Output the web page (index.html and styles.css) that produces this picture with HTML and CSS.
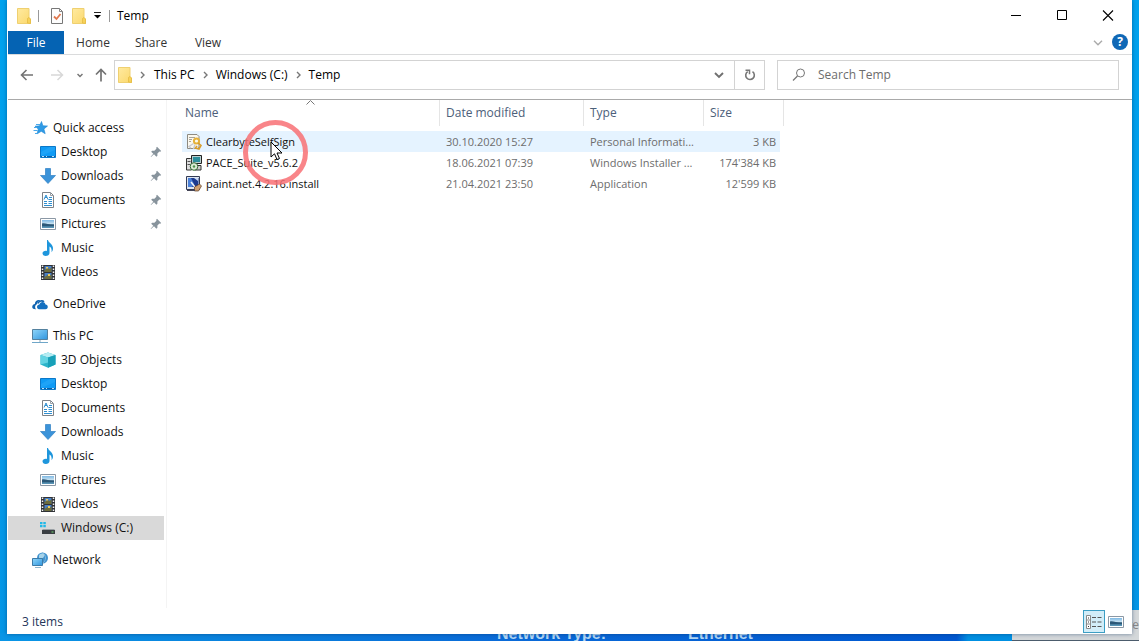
FILE: index.html
```html
<!DOCTYPE html>
<html lang="en">
<head>
<meta charset="utf-8">
<title>Temp</title>
<link rel="stylesheet" href="styles.css">
</head>
<body>
<svg class="sprite" aria-hidden="true">
  <defs>
    <linearGradient id="g-folder" x1="0" y1="0" x2="1" y2="1"><stop offset="0" stop-color="#ffeaa0"/><stop offset="1" stop-color="#fbd86c"/></linearGradient>
    <linearGradient id="g-screen" x1="0" y1="0" x2="1" y2="1"><stop offset="0" stop-color="#8fd6fa"/><stop offset="1" stop-color="#2f95de"/></linearGradient>
    <linearGradient id="g-photo" x1="0" y1="0" x2="0" y2="1"><stop offset="0" stop-color="#7db8e4"/><stop offset=".45" stop-color="#c4e0f0"/><stop offset=".6" stop-color="#2d5a78"/><stop offset="1" stop-color="#5f9ec0"/></linearGradient>
  </defs>
  <symbol id="folder" viewBox="0 0 16 16"><path d="M1.500.5h11.500v9.500l1.500 1v4.500h-13z" fill="url(#g-folder)" stroke="#efd070"/><path d="M11.500 15V10.500l1.500-1 1.500 1.500v4.500z" fill="#f7d25c" stroke="#e3b93e" stroke-width=".7"/></symbol>
  <symbol id="props" viewBox="0 0 16 16"><path d="M2.500.5h8l3 3v12h-11z" fill="#fdfdfd" stroke="#777"/><path d="M10.500.5v3h3" fill="none" stroke="#888"/><path d="M5 8.500l2.500 2.500L11.500 6" fill="none" stroke="#e0784e" stroke-width="1.800"/></symbol>
  <symbol id="star" viewBox="0 0 16 16"><path d="M9.500 1.500l1.400 4.300 4.600.2-3.600 3 1.300 4.700-4-2.400-4.200 2.600 1.300-4.800L3 6.200l4.600-.4z" fill="#2f9be6" stroke="#1c86d4" stroke-width=".6"/><path d="M4 4.500h4M1.500 10.500h4M2 7.500h3M3 13.500h3" stroke="#4aa8ea" stroke-width="1"/></symbol>
  <symbol id="desktop" viewBox="0 0 16 16"><path d="M.5 2.500h15v11H.5z" fill="#0f9bf5" stroke="#0b78c8"/><path d="M1 12.500h14" stroke="#0a5fa8"/><path d="M2 12.500h2M6 12.500h1M12 12.500h2" stroke="#bfe3fb"/><path d="M1 12V8l9-5h5v3z" fill="#3db1fb" opacity=".35"/></symbol>
  <symbol id="download" viewBox="0 0 16 16"><path d="M5.500.5h5v7h5L8 15.500.5 7.500h5z" fill="#3b93d9" stroke="#2f7fc4" stroke-width=".7"/></symbol>
  <symbol id="doc" viewBox="0 0 16 16"><path d="M2.500.5h8l3 3v12h-11z" fill="#fff" stroke="#7d8288"/><path d="M10.500.5v3h3" fill="none" stroke="#9aa0a6"/><path d="M4 7.500L6 3l2 4.500M5 5.500h2M9 5.500h3M8.500 7.500H12M4 9.500h3M8.500 9.500H12M4 11.500h3M8.500 11.500H12M4 13.500h8" fill="none" stroke="#2f8fd0"/></symbol>
  <symbol id="photo" viewBox="0 0 16 16"><path d="M.5 2.500h15v11H.5z" fill="#fff" stroke="#8b98a5"/><path d="M2 4h12v8H2z" fill="url(#g-photo)"/><path d="M2 7.500C5 6.500 8 9 14 9v1H2z" fill="#2b5878"/></symbol>
  <symbol id="music" viewBox="0 0 16 16"><path d="M8 0c.4 3 5.500 4 5 9-.2 1.500-.8 2.500-1.500 3.200.6-3-.5-5-2-5.700V13c0 2-1.700 3-3.700 3S2.500 14.800 2.500 13.300c0-1.800 2.500-3 4.500-2.300V0z" fill="#1e96dc"/></symbol>
  <symbol id="video" viewBox="0 0 16 16"><path d="M1 1h14v15H1z" fill="#303236"/><path d="M2.500 1.500v14M13.500 1.500v14" stroke="#f2f2f2" stroke-width="1.500" stroke-dasharray="1.500 1.500"/><path d="M4.500 2h7v6h-7zM4.500 9h7v6h-7z" fill="#4a80c4"/><path d="M4.500 6l3-2 2 1 2-1.500V8h-7zM4.500 13l3-2 2 1 2-1.500V15h-7z" fill="#6d6c3c"/><path d="M8 10h2v2H8zM6 3h2v1.500H6z" fill="#eecb5a"/></symbol>
  <symbol id="cloud" viewBox="0 0 16 16"><path d="M.2 11c0-2 1.500-3 2.600-3 .2-3 3-4.700 5.800-3.500C5.500 5 5 8 5 8.200c-1.800.6-2.500 3-1 5-2 .1-3.800-.4-3.800-2.200z" fill="#0f63b0"/><path d="M5 11c0-1.700 1.200-2.600 2.400-2.500C8 5.500 12.500 5 13.500 8.500c3 .3 3 4.700 0 4.800H7C5.800 13.200 5 12.200 5 11z" fill="#1470c0"/><path d="M5.800 7.500C7 4.500 10.500 4.300 12 5.800" stroke="#0f63b0" stroke-width="1.600" fill="none"/></symbol>
  <symbol id="pc" viewBox="0 0 16 16"><path d="M.5 1.500h15v10H.5z" fill="url(#g-screen)" stroke="#54819f"/><path d="M7 12h2v2H7z" fill="#c4d3dd"/><path d="M0 14.500h16" stroke="#6fa6c8"/></symbol>
  <symbol id="cube" viewBox="0 0 16 16"><path d="M8 .5L15.500 3v9.500L8 15.800.5 12.500V3z" fill="#2cb4c9"/><path d="M8 .5L15.500 3 8 5.500.5 3z" fill="#b5ecf2"/><path d="M8 5.500L15.500 3v9.500L8 15.800z" fill="#17a0b8"/><path d="M.5 3L8 5.500v5L.5 12.500z" fill="#63d3e2"/></symbol>
  <symbol id="drive" viewBox="0 0 16 16"><path d="M0 2h2.500v2.200H0zM3.300 2h2.500v2.200H3.300zM0 5h2.500v2.200H0zM3.300 5h2.500v2.200H3.300z" fill="#20b8e8"/><path d="M3 9h11l1 1H2z" fill="#9aa0a4"/><path d="M2 10h13v4H2z" fill="#3a3e42"/><path d="M11.500 12h2" stroke="#6fd46f"/></symbol>
  <symbol id="network" viewBox="0 0 16 16"><circle cx="10.500" cy="6" r="5.500" fill="#3f92cf"/><path d="M7 3c2-2 3-1 4-2l2 2-2 3H7z" fill="#a6d3ea"/><path d="M10.500.5c4 3 4 8 0 11" fill="none" stroke="#7fb8dc"/><path d="M.5 6.500h10v7H.5z" fill="url(#g-screen)" stroke="#3d7ba8"/><path d="M3 15.500h6" stroke="#8fb6cd"/></symbol>
  <symbol id="pin" viewBox="0 0 12 12"><path d="M7 .8L11.200 5l-1 .8-.8-.2-2 2v2.200l-1 .9-2.400-2.400L1 11l-.3-.3L3.300 7.800 1.200 5.700l.9-1h2.300l2-2L6.200 1.700z" fill="#87939c"/></symbol>
  <symbol id="cert" viewBox="0 0 16 16"><path d="M1.500.5h9.500l2 2v11l-2 1h-9.500z" fill="#fbf8ee" stroke="#8e8a80"/><path d="M3 3.500h6M3 5.500h3M3 7.500h2" stroke="#a9a49a"/><path d="M7.500 9.500L3 12.500l2 1.500M9 10.500L7.500 15" fill="none" stroke="#c8cad0" stroke-width="1.500"/><circle cx="10.500" cy="7" r="2.600" fill="none" stroke="#e6b23a" stroke-width="2"/><path d="M12 9l3 2.500-2 3.500-3.500-1 1.500-2" fill="none" stroke="#d99c28" stroke-width="1.600"/></symbol>
  <symbol id="msi" viewBox="0 0 16 16"><path d="M5.500.5h10v8h-10z" fill="#b9d0d0" stroke="#222"/><path d="M7 2h7v5H7z" fill="#2c8f9c"/><path d="M9 10.500h6v4.500H9z" fill="#ccc" stroke="#333"/><path d="M.5 3.500h4l1 1v10.500h-5z" fill="#ddd" stroke="#333"/><path d="M1.500 6.500h3M1.500 9.500h3" stroke="#555"/><circle cx="8" cy="11.500" r="3.800" fill="#dcebd6" stroke="#346834"/><circle cx="8" cy="11.500" r="1.200" fill="#4b934b"/></symbol>
  <symbol id="paint" viewBox="0 0 16 16"><path d="M.5.500h13v13H.5z" fill="#dfe6f0" stroke="#333b55"/><path d="M2 2h10.500v9H2z" fill="#1d3a8e"/><path d="M2 2h3l3 6-2 3H2z" fill="#4a80d8"/><path d="M8 2h4v3z" fill="#c9d8f4"/><path d="M5 6l4 5" stroke="#f4f4f4" stroke-width="1.500"/><path d="M8.500 11l5-3 2 2-3 5h-4z" fill="#d0a070" stroke="#5a3c28" stroke-width=".7"/><path d="M1 14.500h8" stroke="#445"/></symbol>
  <symbol id="details" viewBox="0 0 16 16"><path d="M.5 1.500h4v13h-4z" fill="#fff" stroke="#8a8a8a"/><path d="M0 6h5M0 10h5" stroke="#8a8a8a"/><path d="M2 4h1M2 8h1M2 12.500h1" stroke="#333"/><path d="M6 3.500h4M11.500 3.500h4M6 8h4M11.500 8h4M6 12.500h4M11.500 12.500h4" stroke="#555"/></symbol>
</svg>

<div class="backdrop" aria-hidden="true">
  <div class="backdrop-strip"></div>
  <div class="backdrop-panel"><span class="backdrop-tail">re</span></div>
  <span class="backdrop-label label-type">Network Type:</span>
  <span class="backdrop-label label-value">Ethernet</span>
</div>

<div class="window">
  <header class="titlebar">
    <svg class="icon"><use href="#folder"/></svg>
    <span class="bar"></span>
    <button class="quick" aria-label="Properties"><svg class="icon"><use href="#props"/></svg></button>
    <button class="quick" aria-label="New folder"><svg class="icon"><use href="#folder"/></svg></button>
    <button class="quick more" aria-label="Customize Quick Access Toolbar"><svg width="7" height="7" viewBox="0 0 7 7"><path d="M0 .5h7" stroke="#222"/><path d="M0 3h7L3.500 6.500z" fill="#000"/></svg></button>
    <span class="bar bar-last"></span>
    <h1 class="title">Temp</h1>
    <div class="controls">
      <button aria-label="Minimize"><svg width="12" height="12" viewBox="0 0 12 12"><path d="M1 5.500h10" stroke="#000"/></svg></button>
      <button aria-label="Maximize"><svg width="12" height="12" viewBox="0 0 12 12"><path d="M1.500.5h9v9h-9z" fill="none" stroke="#000"/></svg></button>
      <button aria-label="Close"><svg width="12" height="12" viewBox="0 0 12 12"><path d="M1 .5l10 10M11 .5L1 10.500" stroke="#000" stroke-width="1.100"/></svg></button>
    </div>
  </header>

  <div class="ribbon">
    <button class="tab file">File</button>
    <button class="tab">Home</button>
    <button class="tab">Share</button>
    <button class="tab">View</button>
    <button class="expand" aria-label="Expand the Ribbon"><svg width="10" height="6" viewBox="0 0 10 6"><path d="M1 .8l4 4 4-4" fill="none" stroke="#aaa" stroke-width="1.400"/></svg></button>
    <button class="help" aria-label="Help">?</button>
  </div>

  <div class="navbar">
    <div class="history">
      <button aria-label="Back"><svg width="14" height="12" viewBox="0 0 14 12"><path d="M13 6H2M6.500 1L1.500 6l5 5" fill="none" stroke="#737373" stroke-width="1.600"/></svg></button>
      <button aria-label="Forward"><svg width="14" height="12" viewBox="0 0 14 12"><path d="M1 6h11M7.500 1l5 5-5 5" fill="none" stroke="#d8d8d8" stroke-width="1.500"/></svg></button>
      <button class="recent" aria-label="Recent locations"><svg width="6" height="5" viewBox="0 0 6 5"><path d="M.5 1L3 3.500 5.500 1" fill="none" stroke="#777" stroke-width="1.500"/></svg></button>
      <button aria-label="Up"><svg width="12" height="14" viewBox="0 0 12 14"><path d="M6 13.500V2M1 6.500l5-5 5 5" fill="none" stroke="#737373" stroke-width="1.700"/></svg></button>
    </div>
    <div class="address">
      <svg class="icon"><use href="#folder"/></svg>
      <svg class="crumb-arrow" viewBox="0 0 5 8"><path d="M1 1l3 3-3 3"/></svg>
      <button class="crumb">This PC</button>
      <svg class="crumb-arrow" viewBox="0 0 5 8"><path d="M1 1l3 3-3 3"/></svg>
      <button class="crumb">Windows (C:)</button>
      <svg class="crumb-arrow" viewBox="0 0 5 8"><path d="M1 1l3 3-3 3"/></svg>
      <button class="crumb">Temp</button>
      <button class="drop" aria-label="Previous locations"><svg width="10" height="7" viewBox="0 0 10 7"><path d="M1 1l4 4 4-4" fill="none" stroke="#707070" stroke-width="1.900"/></svg></button>
      <button class="refresh" aria-label="Refresh"><svg width="12" height="12" viewBox="0 0 12 12"><path d="M8.500 2.700a4.300 4.300 0 1 1-4.800-.1" fill="none" stroke="#777" stroke-width="1.600"/><path d="M1.500 1.300h4v4" fill="none" stroke="#777" stroke-width="1.500"/></svg></button>
    </div>
    <label class="search">
      <svg width="14" height="14" viewBox="0 0 14 14"><circle cx="8.500" cy="5" r="4" fill="none" stroke="#777"/><path d="M5.500 8L1 12.500" stroke="#777" stroke-width="1.200"/></svg>
      <input type="search" placeholder="Search Temp" aria-label="Search Temp">
    </label>
  </div>

  <div class="content">
    <nav class="sidebar">
      <ul class="group">
        <li><a class="item root" href="#"><svg class="icon"><use href="#star"/></svg>Quick access</a></li>
        <li><a class="item" href="#"><svg class="icon"><use href="#desktop"/></svg>Desktop<svg class="pin"><use href="#pin"/></svg></a></li>
        <li><a class="item" href="#"><svg class="icon"><use href="#download"/></svg>Downloads<svg class="pin"><use href="#pin"/></svg></a></li>
        <li><a class="item" href="#"><svg class="icon"><use href="#doc"/></svg>Documents<svg class="pin"><use href="#pin"/></svg></a></li>
        <li><a class="item" href="#"><svg class="icon"><use href="#photo"/></svg>Pictures<svg class="pin"><use href="#pin"/></svg></a></li>
        <li><a class="item" href="#"><svg class="icon"><use href="#music"/></svg>Music</a></li>
        <li><a class="item" href="#"><svg class="icon"><use href="#video"/></svg>Videos</a></li>
      </ul>
      <ul class="group">
        <li><a class="item root" href="#"><svg class="icon"><use href="#cloud"/></svg>OneDrive</a></li>
      </ul>
      <ul class="group">
        <li><a class="item root" href="#"><svg class="icon"><use href="#pc"/></svg>This PC</a></li>
        <li><a class="item" href="#"><svg class="icon"><use href="#cube"/></svg>3D Objects</a></li>
        <li><a class="item" href="#"><svg class="icon"><use href="#desktop"/></svg>Desktop</a></li>
        <li><a class="item" href="#"><svg class="icon"><use href="#doc"/></svg>Documents</a></li>
        <li><a class="item" href="#"><svg class="icon"><use href="#download"/></svg>Downloads</a></li>
        <li><a class="item" href="#"><svg class="icon"><use href="#music"/></svg>Music</a></li>
        <li><a class="item" href="#"><svg class="icon"><use href="#photo"/></svg>Pictures</a></li>
        <li><a class="item" href="#"><svg class="icon"><use href="#video"/></svg>Videos</a></li>
        <li><a class="item current" href="#" aria-current="page"><svg class="icon"><use href="#drive"/></svg>Windows (C:)</a></li>
      </ul>
      <ul class="group">
        <li><a class="item root" href="#"><svg class="icon"><use href="#network"/></svg>Network</a></li>
      </ul>
    </nav>

    <main class="files">
      <table class="list">
        <colgroup><col class="c-name"><col class="c-date"><col class="c-type"><col class="c-size"></colgroup>
        <thead>
          <tr>
            <th aria-sort="ascending"><button class="sort">Name<svg class="sort-mark" width="9" height="5" viewBox="0 0 9 5"><path d="M.5 4.500l4-4 4 4" fill="none" stroke="#777"/></svg></button></th>
            <th><button class="sort">Date modified</button></th>
            <th><button class="sort">Type</button></th>
            <th><button class="sort">Size</button></th>
          </tr>
        </thead>
        <tbody>
          <tr class="hover"><td class="name"><div class="entry"><svg class="icon"><use href="#cert"/></svg>ClearbyteSelfSign</div></td><td>30.10.2020 15:27</td><td>Personal Informati...</td><td class="size">3 KB</td></tr>
          <tr><td class="name"><div class="entry"><svg class="icon"><use href="#msi"/></svg>PACE_Suite_v5.6.2</div></td><td>18.06.2021 07:39</td><td>Windows Installer ...</td><td class="size">174'384 KB</td></tr>
          <tr><td class="name"><div class="entry"><svg class="icon"><use href="#paint"/></svg>paint.net.4.2.16.install</div></td><td>21.04.2021 23:50</td><td>Application</td><td class="size">12'599 KB</td></tr>
        </tbody>
      </table>
    </main>
  </div>

  <footer class="status">
    <span>3 items</span>
    <div class="views">
      <button class="view active" aria-label="Details view"><svg class="icon"><use href="#details"/></svg></button>
      <button class="view" aria-label="Large thumbnails"><svg class="icon"><use href="#photo"/></svg></button>
    </div>
  </footer>
</div>

<div class="click-ring" aria-hidden="true"></div>
<svg class="pointer" aria-hidden="true" width="13" height="20" viewBox="0 0 13 20"><path d="M1 1v15l3.500-3.200L7 18.500l2.500-1L7 12h5z" fill="#fff" stroke="#000"/></svg>
</body>
</html>
```
FILE: styles.css
```css
* { box-sizing: border-box; }

body {
  margin: 0;
  height: 100vh;
  padding: 0 7px 7px;
  overflow: hidden;
  background: linear-gradient(#00a3ee, #0596e6);
  font: 12px/16px "Open Sans", "Noto Sans", sans-serif;
  color: #111;
}

button {
  display: flex;
  align-items: center;
  justify-content: center;
  margin: 0;
  padding: 0;
  border: 0;
  background: none;
  font: inherit;
  color: inherit;
}

a { color: inherit; text-decoration: none; }
ul { list-style: none; margin: 0; padding: 0; }
.sprite { position: absolute; width: 0; height: 0; }
.icon { width: 16px; height: 16px; flex: none; display: block; }

/* Desktop behind the window */
.backdrop { position: absolute; inset: 0; overflow: hidden; }
.backdrop-strip {
  position: absolute;
  left: 0; right: 0; bottom: 0;
  height: 8px;
  background: linear-gradient(90deg, #0a96e6, #0a7edc 25%, #0a6ad8 45%, #0058d0 84%, #0090e2 85%);
}
.backdrop-panel {
  position: absolute;
  right: 0; bottom: 0;
  width: 127px;
  height: 31px;
  background: #d4d8da;
  border-bottom: 1px solid #4c5c6c;
}
.backdrop-tail { position: absolute; right: 0; top: 7px; color: #888; }
.backdrop-label {
  position: absolute;
  bottom: -2px;
  font: bold 16px/18px "Liberation Sans", sans-serif;
  color: #b4d8f4;
}
.label-type { left: 497px; }
.label-value { left: 688px; }

.window {
  position: relative;
  display: flex;
  flex-direction: column;
  height: 100%;
  padding-left: 1px;
  background: #fff;
  box-shadow: 0 0 4px rgba(0, 40, 90, .5);
}

.titlebar { display: flex; align-items: center; height: 31px; padding-left: 8px; }
.bar { width: 1px; height: 12px; margin: 0 7px 0 6px; background: #999; }
.quick { width: 22px; height: 22px; }
.quick.more { width: 15px; }
.bar-last { margin: 0 7px 0 4px; }
.title { margin: 0; font: inherit; color: #000; }
.controls { display: flex; margin-left: auto; padding-right: 1px; }
.controls button { width: 46px; height: 31px; }

.ribbon { display: flex; height: 24px; border-bottom: 1px solid #dadbdc; color: #333; }
.tab { width: 58px; height: 23px; }
.tab.file { width: 56px; background: #0563b3; color: #fff; }
.tab:nth-child(4) { width: 56px; }
.expand { width: 22px; margin-left: auto; }
.help {
  width: 16px; height: 16px;
  margin: 3px 4px 0 3px;
  border-radius: 50%;
  background: #0f68b6;
  color: #fff;
  font-weight: bold;
}

.navbar {
  display: flex;
  gap: 12px;
  height: 45px;
  padding: 5px 13px 9px 0;
  border-bottom: 1px solid #a9a9a9;
}
.history { display: flex; width: 94px; padding-left: 12px; }
.history button { width: 14px; margin-right: 16px; }
.history .recent { width: 6px; margin: 0 12px 0 -3px; }
.history button:last-child { width: 12px; margin: 0; }
.address {
  display: flex;
  align-items: center;
  flex: 1;
  padding-left: 2px;
  border: 1px solid #d3d3d3;
  color: #000;
}
.crumb-arrow { width: 5px; height: 8px; margin: 0 9px 0 7px; fill: none; stroke: #777; stroke-width: 1.4; }
.crumb + .crumb-arrow { margin: 0 8px; }
.drop { width: 30px; height: 100%; margin-left: auto; }
.refresh { width: 30px; height: 100%; border-left: 1px solid #d3d3d3; }
.search {
  display: flex;
  align-items: center;
  gap: 12px;
  flex: 0 1 342px;
  padding: 0 14px;
  border: 1px solid #d3d3d3;
}
.search input { flex: 1; min-width: 0; padding: 0; border: 0; outline: 0; background: none; font: inherit; }
.search input::placeholder { color: #6d6d6d; opacity: 1; }

.content { display: flex; flex: 1; min-height: 0; }
.sidebar { width: 159px; padding: 16px 2px 0 0; border-right: 1px solid #f4f4f4; }
.group + .group { margin-top: 8px; }
.item { display: flex; align-items: center; gap: 5px; height: 24px; padding-left: 32px; }
.item.root { padding-left: 24px; }
.item.current { background: #d9d9d9; }
.pin { width: 12px; height: 12px; margin: 0 2px 0 auto; }

.files { flex: 1; min-width: 0; padding-left: 15px; }
.list { width: 602px; table-layout: fixed; border-collapse: separate; border-spacing: 0; color: #6d6d6d; }
.c-name { width: 258px; }
.c-date { width: 144px; }
.c-type { width: 120px; }
.c-size { width: 80px; }
th { padding: 0 0 5px; font-weight: normal; }
.sort {
  position: relative;
  width: 100%;
  height: 26px;
  padding-left: 6px;
  border-right: 1px solid #e5e5e5;
  justify-content: flex-start;
  color: #4c607a;
}
th:first-child .sort { padding-left: 3px; }
.sort-mark { position: absolute; top: 0; left: 0; right: 0; margin: 0 auto; }
td { height: 21px; padding: 0 0 0 6px; font-size: 11px; white-space: nowrap; }
td.name { padding-left: 4px; color: #111; }
td.size { padding: 0 4px 0 0; border-right: 4px solid transparent; background-clip: padding-box; text-align: right; }
.entry { display: flex; align-items: center; gap: 4px; }
.hover td { background-color: #e5f3ff; }

.status { display: flex; align-items: center; justify-content: space-between; height: 26px; padding: 1px 5px 0 14px; color: #24365a; }
.views { display: flex; }
.view { width: 22px; height: 23px; }
.view.active { border: 1px solid #3c9ec4; background: #d2edf8; }

/* Click highlight and mouse pointer */
.click-ring {
  position: absolute;
  left: 243px; top: 120px;
  width: 65px; height: 65px;
  border: 5px solid rgba(248, 112, 116, .85);
  border-radius: 50%;
}
.pointer { position: absolute; left: 270px; top: 141px; }
```
